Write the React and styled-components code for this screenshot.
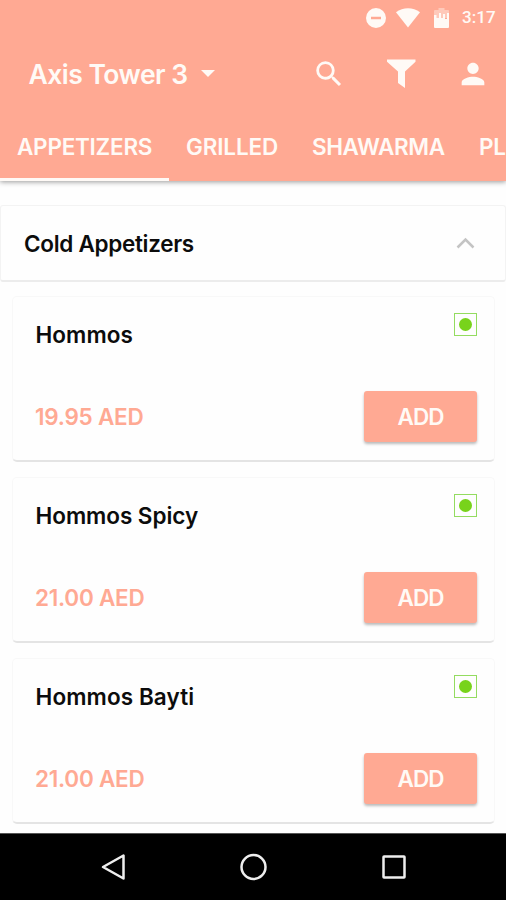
import React from "react";
import styled, { createGlobalStyle } from "styled-components";

const CORAL = "#ffa993";

const GlobalStyle = createGlobalStyle`
  *, *::before, *::after { box-sizing: border-box; }
  body { margin: 0; background: #fefefe; font-family: Inter, Roboto, sans-serif; }
  button { font: inherit; border: 0; padding: 0; background: none; color: inherit; }
`;

const Screen = styled.div`
  display: flex;
  flex-direction: column;
  width: 506px;
  height: 900px;
  overflow: hidden;
  background: #fefefe;
`;

const Header = styled.header`
  flex: none;
  height: 181px;
  display: flex;
  flex-direction: column;
  background: ${CORAL};
  color: #fffaf6;
  box-shadow: 0 1px 5px rgba(0, 0, 0, 0.4);
`;

const StatusBar = styled.div`
  height: 35px;
  display: flex;
  align-items: center;
  justify-content: flex-end;
  padding-right: 11px;
`;

const StatusIcon = styled.svg`
  flex: none;
  display: block;
  margin-right: ${(p) => p.$gap}px;
`;

const Clock = styled.span`
  width: 33px;
  font: 500 17px/35px Roboto, sans-serif;
  letter-spacing: 0.05px;
  white-space: nowrap;
`;

const Toolbar = styled.div`
  height: 78px;
  display: flex;
  align-items: center;
  padding: 0 16px 0 28px;
`;

const Location = styled.button`
  display: flex;
  align-items: center;
  gap: 13px;
  margin-right: auto;
  svg { display: block; margin-top: -2px; }
`;

const LocationName = styled.span`
  width: 160px;
  font-size: 26.5px;
  font-weight: 600;
  line-height: 36px;
  letter-spacing: -0.5px;
  white-space: nowrap;
`;

const Actions = styled.div`
  display: flex;
  align-items: center;
  gap: 38px;
`;

const Action = styled.button`
  width: 34px;
  height: 34px;
  svg { display: block; }
`;

const Tabs = styled.nav`
  flex: 1;
  display: flex;
  overflow: hidden;
`;

const Tab = styled.button`
  flex: none;
  width: ${(p) => p.$width}px;
  height: 68px;
  padding: 0 0 0 17px;
  text-align: left;
  font-size: 22.5px;
  font-weight: 600;
  line-height: 68px;
  letter-spacing: ${(p) => p.$tracking}px;
  white-space: nowrap;
  box-shadow: ${(p) => (p.$active ? "inset 0 -3px #fffaf6" : "none")};
`;

const Menu = styled.main`
  flex: 1;
  min-height: 0;
  padding-top: 24px;
`;

const Section = styled.div`
  height: 77px;
  display: flex;
  align-items: center;
  justify-content: space-between;
  padding: 1px 30px 0 23px;
  border: 1px solid #f3f3f3;
  border-bottom: 2px solid #ececec;
  border-radius: 3px;
  svg { display: block; margin-top: -2px; }
`;

const Title = styled.h2`
  margin: 0;
  color: #0c0c0c;
  font-size: 22.5px;
  font-weight: 600;
  line-height: 30px;
  letter-spacing: ${(p) => p.$tracking}px;
  white-space: nowrap;
`;

const Cards = styled.div`
  display: flex;
  flex-direction: column;
  gap: 15px;
  padding: 14px 11px 0 12px;
`;

const Card = styled.article`
  height: 166px;
  display: flex;
  flex-direction: column;
  justify-content: space-between;
  padding: 16px 17px 18px 22px;
  border: 1px solid #f8f8f8;
  border-bottom: 2px solid #e4e4e4;
  border-radius: 5px;
`;

const CardTop = styled.div`
  display: flex;
  justify-content: space-between;
  align-items: flex-start;
  ${Title} { margin-top: 7px; padding-left: 0.5px; }
`;

const VegMark = styled.span`
  width: 23px;
  height: 23px;
  display: grid;
  place-items: center;
  border: 1.5px solid #94dc60;
  &::after {
    content: "";
    width: 13px;
    height: 13px;
    border-radius: 50%;
    background: #78d31b;
  }
`;

const CardBottom = styled.div`
  display: flex;
  justify-content: space-between;
  align-items: center;
`;

const Price = styled.span`
  color: ${CORAL};
  font-size: 22.5px;
  font-weight: 600;
  line-height: 30px;
  letter-spacing: -0.25px;
  white-space: nowrap;
`;

const AddButton = styled.button`
  width: 113px;
  height: 51px;
  border-radius: 3px;
  background: ${CORAL};
  color: #fffaf6;
  font-size: 22.5px;
  font-weight: 600;
  letter-spacing: -1px;
  box-shadow: 0 2px 3px rgba(0, 0, 0, 0.27);
`;

const SystemNav = styled.footer`
  flex: none;
  height: 67px;
  display: flex;
  justify-content: center;
  align-items: center;
  gap: 110px;
  padding-left: 2px;
  background: #000;
  border-top: 1px solid #555;
  svg { display: block; }
`;

const tabs = [
  { label: "APPETIZERS", width: 169, tracking: -0.25, active: true },
  { label: "GRILLED", width: 126, tracking: -0.15 },
  { label: "SHAWARMA", width: 167, tracking: -0.4 },
  { label: "PL", width: 44, tracking: -0.3 },
];

const dishes = [
  { name: "Hommos", price: "19.95 AED", tracking: 0.05 },
  { name: "Hommos Spicy", price: "21.00 AED", tracking: -0.05 },
  { name: "Hommos Bayti", price: "21.00 AED", tracking: 0.1 },
];

export default function App() {
  return (
    <Screen>
      <GlobalStyle />
      <Header>
        <StatusBar>
          <StatusIcon $gap={10} width="20" height="20" viewBox="0 0 20 20">
            <path fill="currentColor" fillRule="evenodd" d="M10 0a10 10 0 1 0 0 20a10 10 0 0 0 0-20M5 8.8h10v2.4H5z" />
          </StatusIcon>
          <StatusIcon $gap={14} width="24" height="20" viewBox="0 0 24 20">
            <path fill="currentColor" d="M0 4.2C7-1.1 17-1.1 24 4.2L12 19.5z" />
          </StatusIcon>
          <StatusIcon $gap={13} width="15" height="20" viewBox="0 0 15 20">
            <path fill="currentColor" opacity=".4" d="M4.5 0h6v2H14a1 1 0 0 1 1 1v7H0V3a1 1 0 0 1 1-1h3.500z" />
            <path fill="currentColor" d="M0 7h2.500v3H5V5h2v5h2V6h2v5h2V5h2v14a1 1 0 0 1-1 1H1a1 1 0 0 1-1-1z" />
          </StatusIcon>
          <Clock>3:17</Clock>
        </StatusBar>
        <Toolbar>
          <Location>
            <LocationName>Axis Tower 3</LocationName>
            <svg width="14" height="7" viewBox="0 0 14 7">
              <path fill="currentColor" d="M0 0h14L7 7z" />
            </svg>
          </Location>
          <Actions>
            <Action aria-label="Search">
              <svg width="34" height="34" viewBox="0 0 24 24">
                <path fill="currentColor" d="M15.500 14h-.79l-.28-.27A6.470 6.470 0 0 0 16 9.500 6.500 6.500 0 1 0 9.500 16c1.610 0 3.090-.59 4.230-1.570l.27.28v.79l5 4.990L20.490 19zm-6 0C7.010 14 5 11.990 5 9.500S7.010 5 9.500 5 14 7.010 14 9.500 11.990 14 9.500 14" />
              </svg>
            </Action>
            <Action aria-label="Filter">
              <svg width="34" height="34" viewBox="0 0 34 34">
                <path fill="currentColor" d="M3 2.500h28.500v2.200L21 14.500v16.500l-7-5V14.500L3 4.700z" />
              </svg>
            </Action>
            <Action aria-label="Account">
              <svg width="34" height="34" viewBox="0 0 24 24">
                <path fill="currentColor" d="M12 12c2.210 0 4-1.790 4-4s-1.790-4-4-4-4 1.790-4 4 1.790 4 4 4m0 2c-2.670 0-8 1.340-8 4v2h16v-2c0-2.660-5.330-4-8-4" />
              </svg>
            </Action>
          </Actions>
        </Toolbar>
        <Tabs>
          {tabs.map((t) => (
            <Tab key={t.label} $width={t.width} $tracking={t.tracking} $active={t.active}>
              {t.label}
            </Tab>
          ))}
        </Tabs>
      </Header>
      <Menu>
        <Section>
          <Title $tracking={-0.3}>Cold Appetizers</Title>
          <svg width="19" height="12" viewBox="0 0 19 12">
            <path fill="none" stroke="#c4c4c4" strokeWidth="2.500" d="M1.500 10.500l8-8 8 8" />
          </svg>
        </Section>
        <Cards>
          {dishes.map((d) => (
            <Card key={d.name}>
              <CardTop>
                <Title $tracking={d.tracking}>{d.name}</Title>
                <VegMark />
              </CardTop>
              <CardBottom>
                <Price>{d.price}</Price>
                <AddButton>ADD</AddButton>
              </CardBottom>
            </Card>
          ))}
        </Cards>
      </Menu>
      <SystemNav>
        <svg width="30" height="30" viewBox="0 0 30 30">
          <path fill="none" stroke="#eee" strokeWidth="2.500" strokeLinejoin="round" d="M24.500 3.500v23L4 15z" />
        </svg>
        <svg width="30" height="30" viewBox="0 0 30 30">
          <circle cx="14.500" cy="15" r="12" fill="none" stroke="#eee" strokeWidth="2.500" />
        </svg>
        <svg width="30" height="30" viewBox="0 0 30 30">
          <rect x="4.500" y="4.500" width="21" height="21" rx=".5" fill="none" stroke="#eee" strokeWidth="2.500" />
        </svg>
      </SystemNav>
    </Screen>
  );
}
